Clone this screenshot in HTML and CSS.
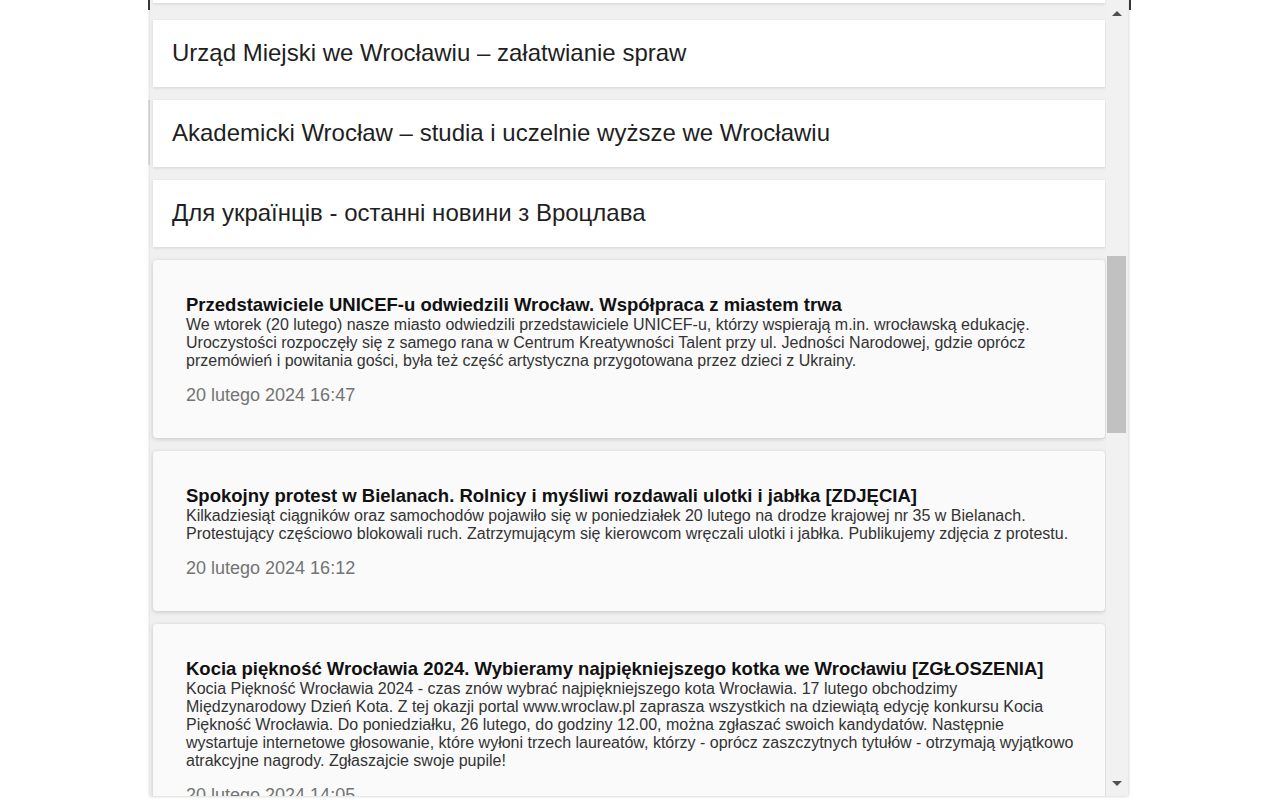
FILE: index.html
```html
<!DOCTYPE html>
<html lang="pl">
<head>
<meta charset="utf-8">
<title>Wrocław – wiadomości</title>
<link rel="stylesheet" href="styles.css">
</head>
<body>
<div class="frame">
  <div class="panel">
    <div class="list">
      <div class="card-tail"></div>
      <a class="link-card" href="#">Urząd Miejski we Wrocławiu – załatwianie spraw</a>
      <a class="link-card" href="#">Akademicki Wrocław – studia i uczelnie wyższe we Wrocławiu</a>
      <a class="link-card" href="#">Для українців - останні новини з Вроцлава</a>

      <article class="news-card">
        <h3 class="news-title">Przedstawiciele UNICEF-u odwiedzili Wrocław. Współpraca z miastem trwa</h3>
        <p class="news-desc">We wtorek (20 lutego) nasze miasto odwiedzili przedstawiciele UNICEF-u, którzy wspierają m.in. wrocławską edukację. Uroczystości rozpoczęły się z samego rana w Centrum Kreatywności Talent przy ul. Jedności Narodowej, gdzie oprócz przemówień i powitania gości, była też część artystyczna przygotowana przez dzieci z Ukrainy.</p>
        <div class="news-date">20 lutego 2024 16:47</div>
      </article>

      <article class="news-card">
        <h3 class="news-title">Spokojny protest w Bielanach. Rolnicy i myśliwi rozdawali ulotki i jabłka [ZDJĘCIA]</h3>
        <p class="news-desc">Kilkadziesiąt ciągników oraz samochodów pojawiło się w poniedziałek 20 lutego na drodze krajowej nr 35 w Bielanach. Protestujący częściowo blokowali ruch. Zatrzymującym się kierowcom wręczali ulotki i jabłka. Publikujemy zdjęcia z protestu.</p>
        <div class="news-date">20 lutego 2024 16:12</div>
      </article>

      <article class="news-card">
        <h3 class="news-title">Kocia piękność Wrocławia 2024. Wybieramy najpiękniejszego kotka we Wrocławiu [ZGŁOSZENIA]</h3>
        <p class="news-desc">Kocia Piękność Wrocławia 2024 - czas znów wybrać najpiękniejszego kota Wrocławia. 17 lutego obchodzimy Międzynarodowy Dzień Kota. Z tej okazji portal www.wroclaw.pl zaprasza wszystkich na dziewiątą edycję konkursu Kocia Piękność Wrocławia. Do poniedziałku, 26 lutego, do godziny 12.00, można zgłaszać swoich kandydatów. Następnie wystartuje internetowe głosowanie, które wyłoni trzech laureatów, którzy - oprócz zaszczytnych tytułów - otrzymają wyjątkowo atrakcyjne nagrody. Zgłaszajcie swoje pupile!</p>
        <div class="news-date">20 lutego 2024 14:05</div>
      </article>
    </div>
    <div class="scrollbar">
      <div class="sb-btn"><span class="arrow-up"></span></div>
      <div class="sb-track"><div class="sb-thumb"></div></div>
      <div class="sb-btn"><span class="arrow-down"></span></div>
    </div>
  </div>
</div>
</body>
</html>
```
FILE: styles.css
```css
* { box-sizing: border-box; }

html, body {
  margin: 0;
  padding: 0;
  background: #ffffff;
  font-family: "Liberation Sans", Arial, sans-serif;
  overflow: hidden;
}

.frame {
  margin-left: 148px;
  width: 983px;
  height: 800px;
  padding: 0 2px;
  background:
    linear-gradient(#3a3a3a, #3a3a3a) left top / 2px 10px no-repeat,
    linear-gradient(#3a3a3a, #3a3a3a) right top / 2px 10px no-repeat,
    linear-gradient(#e4e4e4, #e4e4e4) left 100px / 2px 65px no-repeat;
}

.panel {
  width: 978px;
  height: 796px;
  display: flex;
  background: #f0f0f0;
  box-shadow: 0 0 3px rgba(0, 0, 0, 0.25);
  overflow: hidden;
}

.list {
  flex: 1;
  display: flex;
  flex-direction: column;
  gap: 13px;
  padding: 0 1px 0 3px;
  min-width: 0;
}

.card-tail {
  flex: none;
  height: 3px;
  margin-bottom: 4px;
  background: #ffffff;
  box-shadow: 0 1px 3px rgba(0, 0, 0, 0.12);
}

.link-card {
  flex: none;
  height: 67px;
  display: flex;
  align-items: center;
  padding: 0 20px 1px 19px;
  background: #ffffff;
  color: #1f1f1f;
  font-size: 24px;
  text-decoration: none;
  box-shadow: 0 1px 3px rgba(0, 0, 0, 0.12);
}

.news-card {
  flex: none;
  background: #fafafa;
  border-radius: 4px;
  padding: 34px 26px 32px 33px;
  box-shadow: 0 1px 4px rgba(0, 0, 0, 0.18);
}

.news-title {
  margin: 0;
  font-size: 18.5px;
  font-weight: bold;
  color: #111111;
  line-height: normal;
}

.news-desc {
  margin: 0;
  font-size: 16px;
  color: #333333;
  line-height: normal;
}

.news-date {
  margin-top: 15px;
  font-size: 18px;
  color: #737373;
}

.scrollbar {
  flex: none;
  width: 21px;
  margin-right: 1px;
  display: flex;
  flex-direction: column;
  background: #f1f1f1;
}

.sb-btn {
  flex: none;
  height: 19px;
  display: flex;
  align-items: center;
  justify-content: center;
}

.sb-btn:first-child {
  padding-top: 7px;
}

.sb-btn:last-child {
  padding-bottom: 6px;
}

.arrow-up {
  width: 0;
  height: 0;
  border-left: 5px solid transparent;
  border-right: 5px solid transparent;
  border-bottom: 5px solid #505050;
}

.arrow-down {
  width: 0;
  height: 0;
  border-left: 5px solid transparent;
  border-right: 5px solid transparent;
  border-top: 5px solid #505050;
}

.sb-track {
  flex: 1;
  padding: 0 1px;
}

.sb-thumb {
  margin-top: 237px;
  height: 177px;
  background: #c1c1c1;
}
```
